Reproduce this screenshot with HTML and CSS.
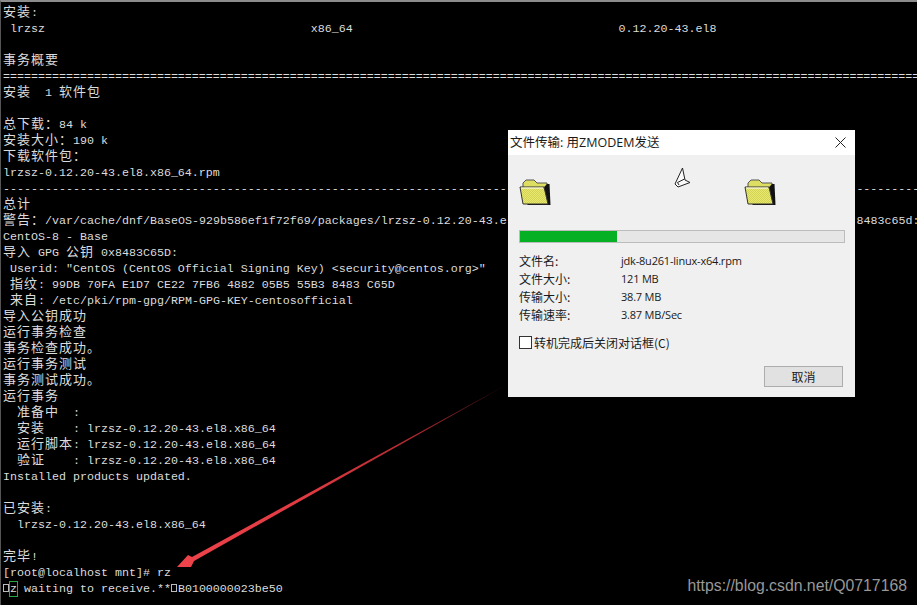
FILE: index.html
```html
<!DOCTYPE html>
<html lang="zh-CN">
<head>
<meta charset="utf-8">
<title>ZMODEM</title>
<link rel="stylesheet" href="styles.css">
</head>
<body>
<main class="term">
<div class="line"><b>安装</b>:</div>
<div class="line"> lrzsz                                      x86_64                                      0.12.20-43.el8</div>
<div class="line"></div>
<div class="line"><b>事务概要</b></div>
<div class="line">===================================================================================================================================</div>
<div class="line"><b>安装</b>  1 <b>软件包</b></div>
<div class="line"></div>
<div class="line"><b>总下载&#xFF1A;</b>84 k</div>
<div class="line"><b>安装大小&#xFF1A;</b>190 k</div>
<div class="line"><b>下载软件包&#xFF1A;</b></div>
<div class="line">lrzsz-0.12.20-43.el8.x86_64.rpm</div>
<div class="line">-----------------------------------------------------------------------------------------------------------------------------------</div>
<div class="line"><b>总计</b></div>
<div class="line"><b>警告&#xFF1A;</b>/var/cache/dnf/BaseOS-929b586ef1f72f69/packages/lrzsz-0.12.20-43.el8.x86_64.rpm:<b>头</b>V3 RSA/SHA256, Signature, <b>密钥</b> ID 8483c65d: NOKEY</div>
<div class="line">CentOS-8 - Base</div>
<div class="line"><b>导入</b> GPG <b>公钥</b> 0x8483C65D:</div>
<div class="line"> Userid: "CentOS (CentOS Official Signing Key) &lt;security@centos.org&gt;"</div>
<div class="line"> <b>指纹</b>: 99DB 70FA E1D7 CE22 7FB6 4882 05B5 55B3 8483 C65D</div>
<div class="line"> <b>来自</b>: /etc/pki/rpm-gpg/RPM-GPG-KEY-centosofficial</div>
<div class="line"><b>导入公钥成功</b></div>
<div class="line"><b>运行事务检查</b></div>
<div class="line"><b>事务检查成功。</b></div>
<div class="line"><b>运行事务测试</b></div>
<div class="line"><b>事务测试成功。</b></div>
<div class="line"><b>运行事务</b></div>
<div class="line">  <b>准备中</b>  :</div>
<div class="line">  <b>安装</b>    : lrzsz-0.12.20-43.el8.x86_64</div>
<div class="line">  <b>运行脚本</b>: lrzsz-0.12.20-43.el8.x86_64</div>
<div class="line">  <b>验证</b>    : lrzsz-0.12.20-43.el8.x86_64</div>
<div class="line">Installed products updated.</div>
<div class="line"></div>
<div class="line"><b>已安装</b>:</div>
<div class="line">  lrzsz-0.12.20-43.el8.x86_64</div>
<div class="line"></div>
<div class="line"><b>完毕</b>!</div>
<div class="line">[root@localhost mnt]# rz</div>
<div class="line"><i class="tofu"></i><span class="cursor">z</span> waiting to receive.**<i class="tofu"></i>B0100000023be50</div>
</main>

<svg class="arrow" width="917" height="605" viewBox="0 0 917 605" aria-hidden="true">
  <defs>
    <linearGradient id="arrowFade" gradientUnits="userSpaceOnUse" x1="508" y1="384" x2="178" y2="567">
      <stop offset="0" stop-color="#4a1215"/>
      <stop offset="0.3" stop-color="#b02a30"/>
      <stop offset="0.6" stop-color="#e03a42"/>
      <stop offset="1" stop-color="#ee434b"/>
    </linearGradient>
  </defs>
  <polygon fill="url(#arrowFade)" points="508,384 192,557 188,555 177,567 191,567 194,561"/>
</svg>

<section class="dialog">
  <header class="titlebar">
    <span>文件传输: 用ZMODEM发送</span>
    <svg class="close" width="11" height="11" viewBox="0 0 11 11" aria-hidden="true"><path d="M.5.5l10 10M10.500.5l-10 10" stroke="#222" fill="none"/></svg>
  </header>
  <div class="content">
    <div class="icons">
      <svg class="folder" width="32" height="28" viewBox="0 0 32 28" aria-hidden="true">
        <defs>
          <pattern id="dither" width="2" height="2" patternUnits="userSpaceOnUse">
            <rect width="2" height="2" fill="#e8e870"/>
            <rect width="1" height="1" fill="#d4d454"/>
            <rect x="1" y="1" width="1" height="1" fill="#d4d454"/>
          </pattern>
        </defs>
        <path d="M4 10V5l3-3h8l3 3h10v6z" fill="#dede62" stroke="#555"/>
        <path d="M28 6h2.500l1 21H8z" fill="#111"/>
        <path d="M1 9h24l4 17H4z" fill="url(#dither)" stroke="#333"/>
        <path d="M2 10h22" stroke="#fff"/>
      </svg>
      <svg class="plane" width="18" height="22" viewBox="0 0 18 22" aria-hidden="true">
        <path d="M8.500 1 1 17l3 3 12-4.500-5-2.500z" fill="#fafafa" stroke="#222"/>
        <path d="M10.500 12 3.500 15.500 5 18" fill="none" stroke="#222"/>
      </svg>
      <svg class="folder" width="32" height="28" viewBox="0 0 32 28" aria-hidden="true">
        <path d="M4 10V5l3-3h8l3 3h10v6z" fill="#dede62" stroke="#555"/>
        <path d="M28 6h2.500l1 21H8z" fill="#111"/>
        <path d="M1 9h24l4 17H4z" fill="url(#dither)" stroke="#333"/>
        <path d="M2 10h22" stroke="#fff"/>
      </svg>
    </div>
    <div class="progress"><div class="fill"></div></div>
    <dl class="info">
      <dt>文件名:</dt><dd>jdk-8u261-linux-x64.rpm</dd>
      <dt>文件大小:</dt><dd>121 MB</dd>
      <dt>传输大小:</dt><dd>38.7 MB</dd>
      <dt>传输速率:</dt><dd>3.87 MB/Sec</dd>
    </dl>
    <label class="check"><span class="box"></span>转机完成后关闭对话框(C)</label>
    <div class="actions"><button class="cancel" type="button">取消</button></div>
  </div>
</section>

<div class="mark">https://blog.csdn.net/Q0717168</div>
</body>
</html>
```
FILE: styles.css
```css
* { box-sizing: border-box; }
html, body { margin: 0; padding: 0; background: #000; }
body { width: 917px; height: 605px; overflow: hidden; position: relative; }

.term {
  width: 917px;
  height: 605px;
  overflow: hidden;
  background: #000;
  border-top: 2px solid #8c8c8c;
  border-left: 1px solid #555;
  padding: 3px 0 0 2px;
  color: #dcdcdc;
  font-family: "Liberation Mono", monospace;
  font-size: 11.67px;
}
.line { height: 16px; line-height: 16px; white-space: pre; width: 1000px; }
.line b {
  font-family: "Noto Sans CJK SC", sans-serif;
  font-weight: 400;
  font-size: 13px;
  letter-spacing: 1px;
  line-height: 0;
}
.tofu {
  display: inline-block;
  width: 6px;
  height: 8px;
  margin-right: 1px;
  border: 1px solid #bbb;
}
.cursor {
  outline: 1px solid #25a83c;
  display: inline-block;
  height: 14px;
  line-height: 14px;
  vertical-align: top;
  margin-top: 1px;
}

.arrow { position: absolute; left: 0; top: 0; }

.dialog {
  position: absolute;
  left: 508px;
  top: 130px;
  width: 347px;
  height: 267px;
  background: #f0f0f0;
  color: #1a1a1a;
  font-family: "Noto Sans CJK SC", sans-serif;
  font-size: 12px;
  display: flex;
  flex-direction: column;
}
.titlebar {
  height: 25px;
  flex: none;
  background: #fff;
  display: flex;
  align-items: center;
  justify-content: space-between;
  padding: 0 9px 3px 2px;
  font-family: "Open Sans", "Noto Sans CJK SC", sans-serif;
  font-size: 12.5px;
}
.close { margin-top: 3px; }
.content { flex: 1; display: flex; flex-direction: column; padding: 0 10px 10px 11px; }
.icons { display: flex; align-items: flex-start; height: 75px; padding-left: 2px; margin-left: -2px; }
.folder { margin-top: 23px; flex: none; }
.plane { margin-top: 12px; margin-left: 123px; margin-right: 52px; flex: none; }
.progress { height: 13px; background: #e6e6e6; border: 1px solid #bcbcbc; }
.fill { width: 30%; height: 100%; background: #06b025; }
.info {
  margin: 9px 0 0;
  display: grid;
  grid-template-columns: 102px 1fr;
  grid-auto-rows: 18px;
  align-items: center;
  line-height: 18px;
}
.info dt, .info dd { margin: 0; }
.info dd { font-family: "Open Sans", sans-serif; font-size: 11px; letter-spacing: -0.2px; }
.check { display: flex; align-items: center; gap: 2px; margin-top: 9px; height: 18px; }
.box { width: 13px; height: 13px; background: #fff; border: 1px solid #333; flex: none; }
.actions { margin-top: auto; display: flex; justify-content: flex-end; padding-right: 2px; }
.cancel {
  width: 79px;
  height: 21px;
  padding: 0;
  background: #e1e1e1;
  border: 1px solid #adadad;
  color: #1a1a1a;
  font: inherit;
}

.mark {
  position: absolute;
  right: 10px;
  top: 576px;
  color: #989898;
  font-family: "Liberation Sans", sans-serif;
  font-size: 15.8px;
  line-height: 20px;
}
```
